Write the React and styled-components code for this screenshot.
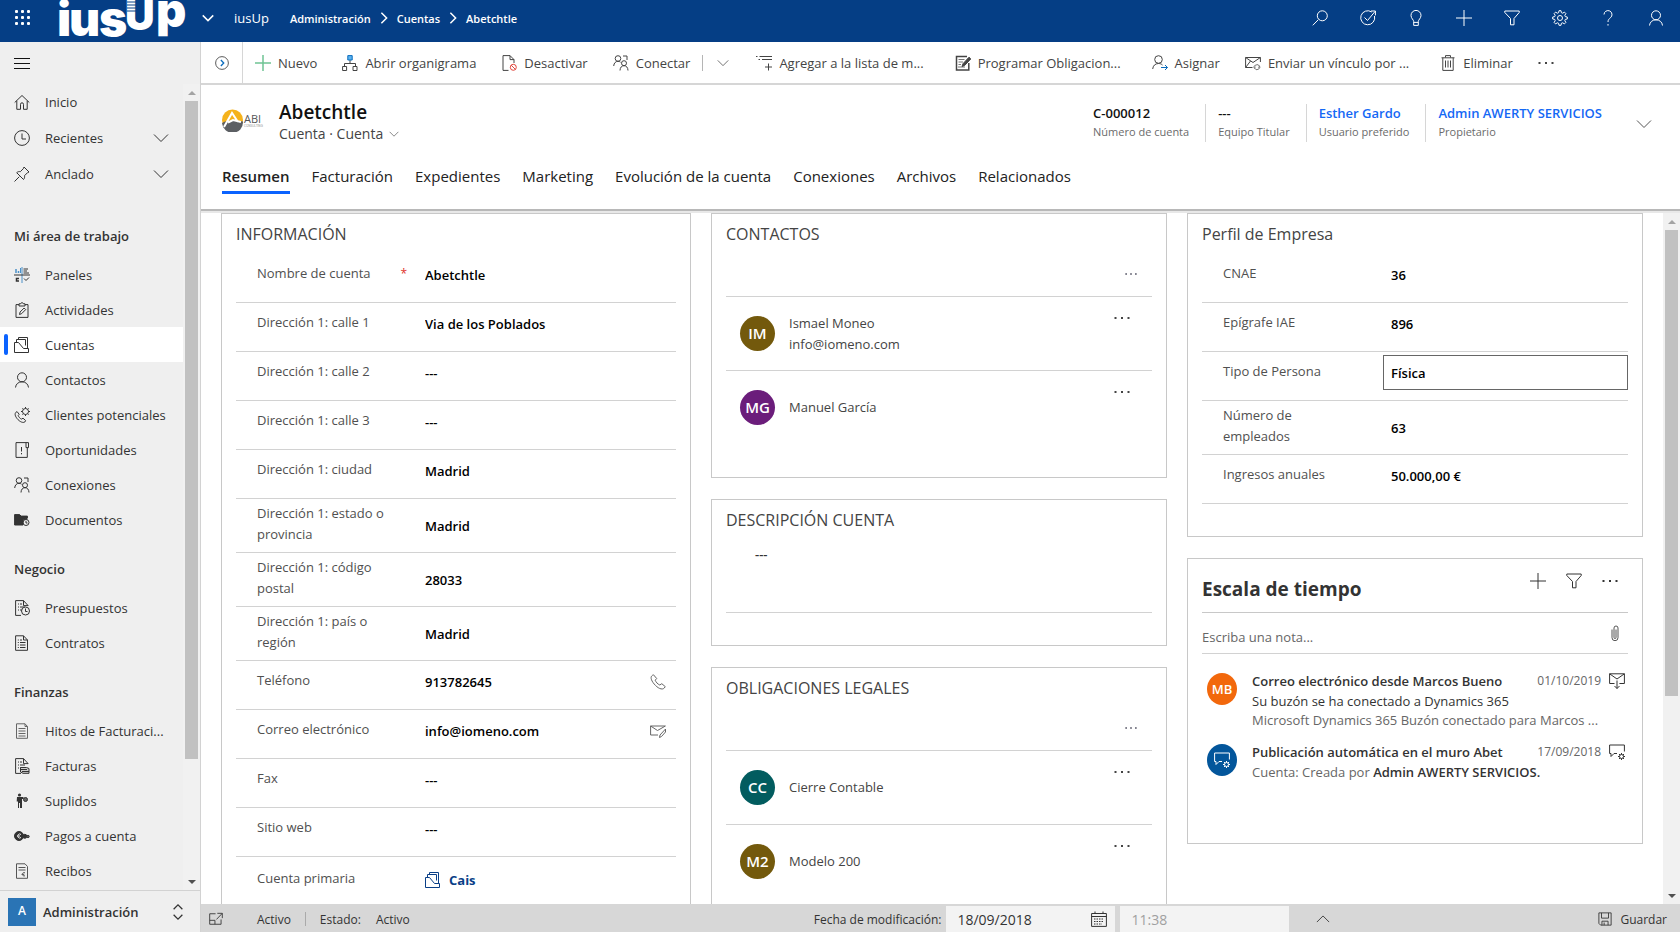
import React from 'react';
import styled, { createGlobalStyle, css } from 'styled-components';

const GlobalStyle = createGlobalStyle`
  * {
    box-sizing: border-box;
  }

  body {
    margin: 0;
    font-family: 'Open Sans', 'Noto Sans', sans-serif;
    font-size: 13px;
    color: #333;
    background: #fff;
  }

  button, input, select, textarea {
    font: inherit;
    color: inherit;
    background: none;
    border: 0;
    margin: 0;
    padding: 0;
    border-radius: 0;
  }

  h1, h2, h3, p, ul {
    margin: 0;
    padding: 0;
    font-weight: 400;
    list-style: none;
  }

  a {
    color: inherit;
    text-decoration: none;
  }
`;

/* ---------- icons ---------- */

const Svg = styled.svg`
  display: block;
  flex: none;
  width: ${props => props.$size || 16}px;
  height: ${props => props.$size || 16}px;
  fill: none;
  stroke: currentColor;
  stroke-width: ${props => props.$stroke || 1};
`;

const people = (
  <>
    <circle cx="5" cy="3.5" r="2.8" />
    <path d="M.7 11c.2-3 2-4.700 4.300-4.700 1 0 1.800.3 2.500.9M10 1h4v4" />
    <circle cx="11" cy="8.200" r="2.500" />
    <path d="M7 15.500c.1-3 1.600-4.800 4-4.800s3.900 1.800 4 4.800" />
  </>
);

const page = <path d="M14 6v-.5L9.500.6H1.600v14.800H7M9.500.6v5H14M4 4h1M6 4h2M4 7h1M6 7h5M4 10h1M6 10h2" />;

const icons = {
  search: <path d="M6.300 9.700.8 15.300M10.300.8a5 5 0 1 1 0 10 5 5 0 0 1 0-10z" />,
  target: <path d="M11.700 2A7 7 0 1 0 14.500 6M4.500 7.500l3 3L15 1.500M11 1h4.400v4.400" />,
  bulb: <path d="M5.700 15.400h4.600v-4c0-1.500 2.700-3 2.700-6a5 5 0 0 0-10 0c0 3 2.700 4.500 2.700 6zM5.700 12.400h4.600" />,
  plus: <path d="M8 0v16M0 8h16" />,
  filter: <path d="M.8 1h14.400v1.500L10 8.500v6.300H6.500V8.500L.8 2.500z" />,
  gear: (
    <>
      <path d="M7 .7h2l.4 2 1.300.5 1.700-1.100 1.500 1.500-1.100 1.700.5 1.300 2 .4v2l-2 .4-.5 1.300 1.100 1.700-1.500 1.500-1.700-1.100-1.300.5-.4 2H7l-.4-2-1.300-.5-1.700 1.100-1.500-1.500 1.100-1.700-.5-1.300-2-.4V7l2-.4.5-1.300-1.100-1.700 1.500-1.500 1.700 1.100 1.300-.5z" />
      <circle cx="8" cy="8" r="2.500" />
    </>
  ),
  help: <path d="M4 4.500a4 4 0 1 1 6.500 3.200C9 9 8 9.800 8 12M8 14v1.600" />,
  person: (
    <>
      <circle cx="8" cy="5.300" r="4.500" />
      <path d="M1.500 15.500c.3-3.500 3-5.700 6.500-5.700s6.200 2.200 6.500 5.700" />
    </>
  ),
  chevronDown: <path d="M1 4.500l7 7 7-7" />,
  chevronUp: <path d="M1 11.500l7-7 7 7" />,
  chevronRight: <path d="M4.500 1l7 7-7 7" />,
  menu: <path d="M0 3.500h16M0 8.500h16M0 13.500h16" />,
  home: <path d="M.7 8.500 8 1.500l7.300 7M2.800 6.800v8.500h3.700v-5a1.500 1.500 0 0 1 3 0v5h3.700V6.800" />,
  clock: (
    <>
      <circle cx="8" cy="8" r="7.400" />
      <path d="M8 3.500V9h4" />
    </>
  ),
  pin: <path d="M.5 15.500l4.800-4.800M10 1l5 5-1.500.7-3 3c.3 1.500 0 2.800-1 3.800L2.700 6.700c1-1 2.300-1.300 3.600-1l3-3z" />,
  panels: (
    <>
      <path d="M2 2v4M4.500 4v2" stroke="#4a90c8" strokeWidth="1.500" />
      <path d="M6.500 1v5M8 0v16" stroke="#4a90c8" />
      <path d="M0 8h16M9.500 2H14M9.500 4H13M9.500 6H15M10 11.500l2 2 3-3" />
      <path d="M5 11.500H2.500v2.500H5" strokeWidth="1.500" />
    </>
  ),
  clipboard: <path d="M5 2.600H2v12.800h12V2.600h-3M5 1.800h1.500C7 .3 9 .3 9.500 1.800H11V4H5zM5.500 12.500l.6-2.500 4-4 1.600 1.600-4 4z" />,
  account: <path d="M2.500 5.500V2.500h9v6M4.500 2.500v-2h9v11M.5 15.500v-10h4l5 6h5v4z" />,
  leads: (
    <>
      <path d="M3 4.500C.6 6 .4 8 3 11.500c3 3.600 6 4.600 7.800 3.500l.8-1.500-2.600-2.300-1.500.9c-1.500-.6-2.700-2-3.300-3.500l1-1.300z" />
      <circle cx="11.500" cy="4.500" r="3" />
      <path d="M11.500 0v1.500M11.500 7.500V9M7 4.500h1.500M14.500 4.500H16M8.400 1.400l1 1M13.600 6.600l1 1M14.600 1.400l-1 1M8.400 7.600l1-1" />
    </>
  ),
  opportunity: <path d="M12 .6H2v14.800h11.300V6M12 .6h2.500v5H12zM7.500 5v4.500M7.500 11v1.300" />,
  people,
  folder: (
    <>
      <path d="M.6 2.600h5l1.500 1.500h6.300v2L9 8v5H.6z" fill="currentColor" />
      <circle cx="12" cy="10.500" r="3" />
      <path d="M13.500 7h-3M12 9v2h1.500" />
    </>
  ),
  quote: (
    <>
      {page}
      <circle cx="11.500" cy="11" r="4" fill="#efefef" />
      <path d="M11.500 8.500v3h2" />
    </>
  ),
  contract: <path d="M13.500 5 9.500.8H1.600v14.500h11.900zM9.500.8V5h4M3.800 5h1M6 5h2M3.800 7.500h1M6 7.500h5.500M3.800 10h1M6 10h5.500M3.800 12.500h1M6 12.500h5.500" />,
  milestone: <path d="M13.500 3.500 11 .8H2.500v14.500h11zM11 .8v2.700h2.500M4.500 5.500h7M4.500 8h7M4.500 10.500h7M4.500 13h7" stroke="#666" />,
  invoice: (
    <>
      {page}
      <path d="M6.500 9.500h6l2.500 1v4.800H9L6.500 14zM6.500 11.500H13M8 13.500h7" fill="#ccc" />
    </>
  ),
  supplied: (
    <>
      <circle cx="5.500" cy="2" r="1.600" fill="currentColor" stroke="none" />
      <path d="M3 4h6.500v2H8v9H6V10H5v5H4V8.500H2.700z" fill="currentColor" stroke="none" />
      <circle cx="11.500" cy="6.500" r="2" fill="#666" />
    </>
  ),
  payments: (
    <>
      <circle cx="5" cy="8" r="4.500" fill="currentColor" />
      <path d="M7 6.500a2 2 0 1 0 0 3M3.500 8H6" stroke="#efefef" />
      <circle cx="10.800" cy="8.300" r="2" fill="currentColor" />
      <circle cx="14" cy="8.500" r="1.200" fill="#666" />
    </>
  ),
  receipt: <path d="M13.500 3.500 11 .8H2.500v14.500h11zM4.500 4.500h7M4.500 7h7M11 9.800c-2-.6-2.500.4-2.500 1.500s.7 2 2.500 1.500M7.500 11.400h2.700" stroke="#555" />,
  circleRight: (
    <>
      <circle cx="8" cy="8" r="7.300" />
      <path d="M6.700 4.500 10 8l-3.300 3.500" stroke="#0b6cbd" strokeWidth="1.500" />
    </>
  ),
  newPlus: <path d="M8 0v16M0 8h16" stroke="#6fc494" strokeWidth="1.500" />,
  orgChart: (
    <>
      <path d="M8 5v3.500M2.500 11V8.500h11V11M.6 11.500h4v4h-4zM11 11.500h4v4h-4z" />
      <path d="M5.800.6h4.400V5H5.800z" fill="#5db4f0" stroke="#0b6cbd" />
    </>
  ),
  deactivate: (
    <>
      <path d="M13 8V4.600L9 .6H2v14.800h5.500M9 .6v4h4" />
      <circle cx="12.300" cy="12.300" r="3" stroke="#e0453c" />
      <path d="M10.200 10.200l4.200 4.200" stroke="#e0453c" />
    </>
  ),
  listPlus: <path d="M0 1.500h1.500M3.500 1.500H16M2.500 4.500H4M6 4.500h10M12.500 8.500v7M9 12h7" />,
  note: (
    <>
      <path d="M12 1.500H1.500v13.500h12.300V8" strokeWidth="1.500" />
      <path d="M3.500 4.500h6M3.500 7h4.500M3.500 9.500h2.500M3 12h7" stroke="#777" />
      <path d="M7 11.500l1-2.800 6-6.500 1.800 1.700-6.200 6.600z" fill="currentColor" />
    </>
  ),
  assign: (
    <>
      <circle cx="6.500" cy="4.500" r="3.800" />
      <path d="M.7 14c.3-3.300 2.500-5.500 5.800-5.500 1.700 0 3 .5 4 1.500" />
      <path d="M9 12.500h6.500M13 10l2.500 2.500L13 15" stroke="#0b6cbd" />
    </>
  ),
  mailLink: (
    <>
      <path d="M7.500 12.500H.6v-10h14.800V7M.6 2.500 8 7.500l7.400-5M.6 12.500 5.500 6" />
      <path d="M10 13.700a1.800 1.800 0 0 1 0-3.300l2-.7a1.800 1.800 0 0 1 1.500 3.200M13.500 10.500a1.800 1.800 0 0 1 .5 3.300l-2 .9a1.800 1.800 0 0 1-1.600-3" stroke="#777" />
    </>
  ),
  trash: <path d="M1.500 2.800h13M5.500 2.500V.6h5v1.900M2.800 2.800v12.600h10.400V2.800M5.500 5.500v7M8 5.500v7M10.500 5.500v7" />,
  more: <path d="M.5 8h2M7 8h2M13.500 8h2" strokeWidth="2" />,
  phone: <path d="M3.500.8C.5 2 .3 4.500 3 8.500c3 4.300 7.500 7.500 10.500 6.200l1.800-2-3.500-3-2 1.300C7.500 10 6 8.200 5.200 6.200L6.700 4.500z" />,
  mailEdit: <path d="M8 12H.6V3h14.800M.6 3 7.500 7.500 15.400 3M9.500 14.500l.5-2.500 5.500-6v3l-4 4.500z" />,
  clip: <path d="M5 4.500v8.200a3 3 0 0 0 6 0V3a2 2 0 0 0-4 0v9.500a1 1 0 0 0 2 0V4.500" />,
  mailIn: <path d="M5.500 10.500H.6V.8h14.800v9.700h-5M.6.8 8 6l7.400-5.200M8 7.500v8M5.500 13 8 15.500l2.500-2.500" />,
  postGear: (
    <>
      <path d="M8 9.500H5l-3 3v-3H.6V1h14.800v6.500" />
      <circle cx="12.500" cy="12.500" r="2" />
      <path d="M12.500 9v1.500M12.500 14.500V16M9 12.500h1.500M14.500 12.500H16M10 10l1 1M14 14l1 1M15 10l-1 1M10 15l1-1" />
    </>
  ),
  popOut: <path d="M7.500 2H.8v12h13V8.500M9.500 1.500h5.700V7M15 1.700 8.500 8.500M.8 9.500h6v4.500" />,
  calendar: (
    <>
      <path d="M.6 2.500h14.800v12.900H.6zM.6 5.500h14.800M4 .5v2M12 .5v2" />
      <path d="M3 8h10M3 10.500h10M3 13h8" strokeDasharray="1.500 1" />
    </>
  ),
  save: <path d="M1 1h14v14H3l-2-2zM4 1v6h8V1M4.500 15v-4.500h7V15M7 12v3" />,
};

const Icon = ({ name, size, stroke }) => (
  <Svg viewBox="0 0 16 16" $size={size} $stroke={stroke} aria-hidden="true">
    {icons[name]}
  </Svg>
);

/* ---------- top bar ---------- */

const Page = styled.div`
  height: 100vh;
  display: flex;
  flex-direction: column;
  overflow: hidden;
`;

const TopBar = styled.header`
  height: 42px;
  flex: none;
  display: flex;
  align-items: center;
  padding: 0 16px 6px 15px;
  background: #053e85;
  color: #fff;
`;

const IconButton = styled.button`
  display: flex;
  align-items: center;
  justify-content: center;
  flex: none;
  width: ${props => props.$width || 16}px;
  height: 24px;
  cursor: pointer;
`;

const Waffle = styled.svg`
  width: 16px;
  height: 16px;
  fill: #fff;
`;

const LogoMark = styled.svg`
  width: 130px;
  height: 42px;
  flex: none;
  align-self: flex-start;
  margin: 0 12px 0 27px;
  fill: #fff;
  font-family: Inter, sans-serif;
  font-weight: 900;
`;

const AppName = styled.a`
  margin: 0 21px 0 18px;
`;

const Crumbs = styled.nav`
  display: flex;
  align-items: center;
  gap: 7px;
  font-size: 11px;
  font-weight: 600;
`;

const TopActions = styled.div`
  display: flex;
  gap: 32px;
  margin-left: auto;
`;

/* ---------- side bar ---------- */

const Body = styled.div`
  flex: 1;
  min-height: 0;
  display: flex;
`;

const SideBar = styled.aside`
  width: 201px;
  flex: none;
  display: flex;
  flex-direction: column;
  background: #efefef;
  border-right: 1px solid #d2d2d2;
`;

const MenuButton = styled.button`
  height: 42px;
  flex: none;
  padding: 0 0 0 14px;
  display: flex;
  align-items: center;
  color: #111;
`;

const NavArea = styled.div`
  flex: 1;
  min-height: 0;
  display: flex;
  overflow: hidden;
`;

const Nav = styled.nav`
  flex: 1;
  min-width: 0;
  overflow: hidden;
`;

const QuickLinks = styled.ul`
  display: grid;
  gap: 1px;
  padding-bottom: 13px;
`;

const NavHeading = styled.h2`
  height: 53px;
  padding: 21px 14px 0;
  font-size: 13px;
  line-height: 22px;
  font-weight: 600;
`;

const NavLink = styled.a`
  position: relative;
  height: 35px;
  display: flex;
  align-items: center;
  gap: 15px;
  padding: 0 14px;
  white-space: nowrap;
  background: ${props => (props.$active ? '#fff' : 'transparent')};

  ${props =>
    props.$active &&
    css`
      &::before {
        content: '';
        position: absolute;
        left: 4px;
        top: 7px;
        width: 4px;
        height: 21px;
        border-radius: 2px;
        background: #0b63ff;
      }
    `}
`;

const NavEnd = styled.span`
  margin-left: auto;
`;

const Track = styled.div`
  width: 17px;
  flex: none;
  display: flex;
  flex-direction: column;
  align-items: center;
  justify-content: space-between;
  padding: 7px 0 6px;
  background: #f1f1f1;
`;

const Thumb = styled.div`
  width: 13px;
  height: ${props => props.$length};
  margin: 6px 0 auto;
  background: #c1c1c1;
`;

const Arrow = styled.span`
  border: 4px solid transparent;
  ${props =>
    props.$up
      ? 'border-top: 0; border-bottom-color: #a3a3a3;'
      : 'border-bottom: 0; border-top-color: #505050;'}
`;

const AreaSwitch = styled.button`
  height: 42px;
  flex: none;
  display: flex;
  align-items: center;
  gap: 7px;
  padding: 0 17px 0 8px;
  border-top: 1px solid #d2d2d2;
  font-weight: 600;
`;

const AreaBadge = styled.span`
  width: 28px;
  height: 28px;
  line-height: 26px;
  background: #2a74b5;
  color: #fff;
  font-size: 12px;
`;

/* ---------- main column ---------- */

const Main = styled.main`
  flex: 1;
  min-width: 0;
  display: flex;
  flex-direction: column;
`;

const CommandBar = styled.div`
  height: 43px;
  flex: none;
  display: flex;
  align-items: center;
  gap: 25px;
  border-bottom: 2px solid #d6d6d6;
  white-space: nowrap;
  color: #444;
`;

const Expander = styled.div`
  align-self: stretch;
  width: 42px;
  margin-right: -13px;
  display: flex;
  align-items: center;
  justify-content: center;
  border-right: 1px solid #d6d6d6;
`;

const Command = styled.button`
  display: flex;
  align-items: center;
  gap: 7px;
  margin-right: ${props => (props.$long ? 6 : 0)}px;
  cursor: pointer;
`;

const Divider = styled.span`
  width: 1px;
  height: 16px;
  background: #b5b5b5;
  margin: 0 -13px;
`;

const RecordHeader = styled.section`
  flex: none;
  height: 126px;
  display: flex;
  flex-direction: column;
  justify-content: space-between;
  padding: 0 10px 0 21px;
  border-bottom: 2px solid #b8b8b8;
  box-shadow: 0 2px 0 #e8e8e8;
  z-index: 1;
`;

const RecordTop = styled.div`
  display: flex;
  padding-top: 15px;
`;

const CompanyLogo = styled.svg`
  width: 42px;
  height: 24px;
  margin: 8px 15px 0 0;
`;

const RecordTitle = styled.h1`
  font-size: 19px;
  line-height: 25px;
  font-weight: 600;
  color: #111;
`;

const RecordType = styled.button`
  display: flex;
  align-items: center;
  gap: 6px;
  font-size: 14px;
  line-height: 18px;
  color: #444;
`;

const Facts = styled.div`
  display: flex;
  margin-left: auto;
  padding-top: 4px;
`;

const Fact = styled.div`
  height: 38px;
  padding: 0 16px 0 12px;
  border-left: 1px solid ${props => (props.$first ? 'transparent' : '#d6d6d6')};
  font-weight: 600;
  line-height: 18px;
  color: #111;

  a {
    color: #1468f5;
  }

  p {
    font-size: 11px;
    line-height: 20px;
    color: #6b6b6b;
  }
`;

const HeaderToggle = styled(IconButton)`
  margin-top: 12px;
  color: #555;
`;

const Tabs = styled.div`
  display: flex;
  gap: 22px;
  padding-bottom: 15px;
`;

const Tab = styled.button`
  font-size: 15px;
  line-height: 24px;
  padding-bottom: 3px;
  color: #222;
  font-weight: ${props => (props.$active ? 600 : 400)};
  border-bottom: 3px solid ${props => (props.$active ? '#0b63ff' : 'transparent')};
`;

const FormArea = styled.div`
  flex: 1;
  min-height: 0;
  display: flex;
  overflow: hidden;
  padding-top: 2px;
`;

const FormGrid = styled.div`
  flex: 1;
  min-width: 0;
  display: grid;
  grid-template-columns: 470fr 456fr 456fr;
  gap: 20px;
  align-items: start;
  padding: 0 20px;
`;

const Column = styled.div`
  display: grid;
  gap: 21px;
  min-width: 0;
`;

const Panel = styled.section`
  min-width: 0;
  padding: 0 14px 32px;
  border: 1px solid #c8c8c8;
`;

const PanelTitle = styled.h2`
  height: 40px;
  font-size: 16px;
  line-height: 40px;
  color: #444;
`;

const Row = styled.div`
  display: grid;
  grid-template-columns: 168px 1fr auto;
  min-height: ${props => (props.$tall ? 54 : 49)}px;
  padding-left: 21px;
  border-bottom: 1px solid #d2d2d2;
`;

const RowLabel = styled.label`
  display: flex;
  justify-content: space-between;
  padding: ${props => props.$top || 9}px 18px 0 0;
  line-height: 21px;
  color: #505050;

  span {
    max-width: 132px;
  }

  b {
    color: #e0322b;
    font-size: 12px;
    font-weight: 400;
  }
`;

const FieldInput = styled.input`
  min-width: 0;
  width: 100%;
  height: 24px;
  align-self: center;
  margin-bottom: ${props => (props.$tall ? 0 : 7)}px;
  font-weight: 600;
  color: #000;
`;

const BoxedSelect = styled.select`
  appearance: none;
  height: 35px;
  margin: 3px 0 0 -8px;
  padding: 0 7px;
  border: 1px solid #666;
  color: #000;
  font-weight: 600;
`;

const Lookup = styled.a`
  display: flex;
  align-items: center;
  gap: 8px;
  padding-bottom: 3px;
  font-weight: 700;
  color: #0a3f87;
`;

const RowAction = styled(IconButton)`
  align-self: center;
  margin: 0 10px 7px 0;
  color: #666;
`;

const ListBar = styled.div`
  height: 43px;
  display: flex;
  justify-content: flex-end;
  align-items: center;
  padding: 0 15px 2px 0;
  border-bottom: 1px solid #d2d2d2;
  color: #445;
`;

const ListItem = styled.li`
  height: 74px;
  display: flex;
  align-items: center;
  gap: 14px;
  padding: 0 22px 0 14px;
  border-bottom: 1px solid #d2d2d2;
  line-height: 21px;
  color: #444;

  &:last-child {
    border-bottom-color: transparent;
  }

  button {
    align-self: flex-start;
    margin: 9px 0 0 auto;
  }
`;

const Avatar = styled.span`
  display: flex;
  align-items: center;
  justify-content: center;
  flex: none;
  width: ${props => (props.$small ? 30 : 35)}px;
  height: ${props => (props.$small ? 32 : 35)}px;
  border-radius: 50%;
  background: ${props => props.$color};
  color: #fff;
  font-size: ${props => (props.$small ? 13 : 15)}px;
  font-weight: 600;
`;

const Description = styled.textarea`
  display: block;
  width: 100%;
  height: 73px;
  padding: 5px 29px;
  resize: none;
  border-bottom: 1px solid #d2d2d2;
  font-weight: 600;
`;

/* ---------- timeline ---------- */

const TimelineHead = styled.div`
  height: 54px;
  display: flex;
  align-items: flex-start;
  gap: 20px;
  padding: 10px 10px 0 0;
  border-bottom: 1px solid #c8c8c8;
`;

const TimelineTitle = styled.h2`
  flex: 1;
  font-size: 19px;
  line-height: 40px;
  font-weight: 700;
`;

const NoteBar = styled.div`
  height: 41px;
  display: flex;
  align-items: center;
  padding: 0 5px 0 0;
  border-bottom: 1px solid #d2d2d2;
  color: #555;

  input {
    flex: 1;
    height: 32px;
    padding-top: 8px;
  }

  input::placeholder {
    color: #666;
    opacity: 1;
  }
`;

const Activities = styled.ul`
  height: 157px;
  padding: 15px 3px 0 5px;
`;

const Activity = styled.li`
  height: 71px;
  display: flex;
  gap: 15px;
  padding-top: 4px;
`;

const ActivityText = styled.div`
  flex: 1;
  min-width: 0;
  margin-top: -3px;
  line-height: 19px;
  white-space: nowrap;
  color: #666;

  b {
    font-weight: 600;
    color: #333;
  }
`;

const ActivityTop = styled.div`
  height: 22px;
  display: flex;
  align-items: center;
  gap: 8px;
  line-height: 22px;
  color: #333;
`;

const ActivityTitle = styled.h3`
  flex: 1;
  font-size: 13px;
  font-weight: 600;
`;

const ActivityDate = styled.time`
  font-size: 12px;
  color: #666;
`;

const Subject = styled.p`
  color: #333;
`;

/* ---------- footer ---------- */

const StatusBar = styled.footer`
  height: 28px;
  flex: none;
  display: flex;
  align-items: center;
  padding: 2px 13px 0 7px;
  background: #d7d7d7;
  font-size: 12px;
  white-space: nowrap;
  z-index: 1;
`;

const StatusText = styled.span`
  margin-left: ${props => props.$left}px;
`;

const StatusDivider = styled.span`
  width: 1px;
  height: 14px;
  margin: 0 14px;
  background: #aaa;
`;

const Modified = styled.div`
  align-self: stretch;
  flex: 1;
  display: flex;
  align-items: center;
  justify-content: center;
  gap: 5px;
  padding-left: 137px;
`;

const StatusField = styled.span`
  align-self: stretch;
  width: 169px;
  display: flex;
  align-items: center;
  padding: 0 8px 0 11px;
  background: #f3f3f3;
  color: ${props => (props.$muted ? '#a0a0a0' : '#333')};

  input {
    flex: 1;
    width: 0;
    font-size: 14px;
  }
`;

const UpButton = styled(IconButton)`
  margin-left: 21px;
`;

const SaveButton = styled.button`
  display: flex;
  align-items: center;
  gap: 8px;
`;

/* ---------- data ---------- */

const workArea = [
  ['panels', 'Paneles'],
  ['clipboard', 'Actividades'],
  ['account', 'Cuentas'],
  ['person', 'Contactos'],
  ['leads', 'Clientes potenciales'],
  ['opportunity', 'Oportunidades'],
  ['people', 'Conexiones'],
  ['folder', 'Documentos'],
];

const business = [
  ['quote', 'Presupuestos'],
  ['contract', 'Contratos'],
];

const finance = [
  ['milestone', 'Hitos de Facturaci...'],
  ['invoice', 'Facturas'],
  ['supplied', 'Suplidos'],
  ['payments', 'Pagos a cuenta'],
  ['receipt', 'Recibos'],
];

const groups = [
  { title: 'Mi área de trabajo', items: workArea },
  { title: 'Negocio', items: business },
  { title: 'Finanzas', items: finance },
];

const topActions = [
  ['search', 'Buscar'],
  ['target', 'Asistente'],
  ['bulb', 'Ideas'],
  ['plus', 'Crear'],
  ['filter', 'Filtrar'],
  ['gear', 'Configuración'],
  ['help', 'Ayuda'],
  ['person', 'Perfil'],
];

const information = [
  { label: 'Nombre de cuenta', value: 'Abetchtle', required: true },
  { label: 'Dirección 1: calle 1', value: 'Via de los Poblados' },
  { label: 'Dirección 1: calle 2', value: '---' },
  { label: 'Dirección 1: calle 3', value: '---' },
  { label: 'Dirección 1: ciudad', value: 'Madrid' },
  { label: 'Dirección 1: estado o provincia', value: 'Madrid', tall: true },
  { label: 'Dirección 1: código postal', value: '28033', tall: true },
  { label: 'Dirección 1: país o región', value: 'Madrid', tall: true },
  { label: 'Teléfono', value: '913782645', action: 'phone' },
  { label: 'Correo electrónico', value: 'info@iomeno.com', action: 'mailEdit' },
  { label: 'Fax', value: '---' },
  { label: 'Sitio web', value: '---' },
];

const tabs = [
  'Resumen',
  'Facturación',
  'Expedientes',
  'Marketing',
  'Evolución de la cuenta',
  'Conexiones',
  'Archivos',
  'Relacionados',
];

/* ---------- components ---------- */

const Scrollbar = ({ length }) => (
  <Track aria-hidden="true">
    <Arrow $up />
    <Thumb $length={length} />
    <Arrow />
  </Track>
);

const Cmd = ({ icon, long, children }) => (
  <Command type="button" $long={long}>
    <Icon name={icon} />
    {children}
  </Command>
);

const Field = ({ id, label, value, required, tall, action }) => (
  <Row $tall={tall}>
    <RowLabel htmlFor={id} $top={tall ? 4 : 9}>
      <span>{label}</span>
      {required && <b>*</b>}
    </RowLabel>
    <FieldInput id={id} defaultValue={value} $tall={tall} />
    {action && (
      <RowAction type="button" aria-label={label}>
        <Icon name={action} />
      </RowAction>
    )}
  </Row>
);

const PersonItem = ({ initials, color, name, mail }) => (
  <ListItem>
    <Avatar $color={color}>{initials}</Avatar>
    <div>
      <p>{name}</p>
      {mail && <p>{mail}</p>}
    </div>
    <IconButton type="button" aria-label={`Más: ${name}`}>
      <Icon name="more" />
    </IconButton>
  </ListItem>
);

const SideNav = () => (
  <SideBar>
    <MenuButton type="button" aria-label="Menú">
      <Icon name="menu" />
    </MenuButton>
    <NavArea>
      <Nav>
        <QuickLinks>
          <li>
            <NavLink href="#inicio"><Icon name="home" />Inicio</NavLink>
          </li>
          <li>
            <NavLink href="#recientes">
              <Icon name="clock" />Recientes
              <NavEnd><Icon name="chevronDown" /></NavEnd>
            </NavLink>
          </li>
          <li>
            <NavLink href="#anclado">
              <Icon name="pin" />Anclado
              <NavEnd><Icon name="chevronDown" /></NavEnd>
            </NavLink>
          </li>
        </QuickLinks>
        {groups.map(group => (
          <div key={group.title}>
            <NavHeading>{group.title}</NavHeading>
            <ul>
              {group.items.map(([icon, text]) => (
                <li key={text}>
                  <NavLink href={`#${icon}`} $active={text === 'Cuentas'}>
                    <Icon name={icon} />
                    {text}
                  </NavLink>
                </li>
              ))}
            </ul>
          </div>
        ))}
      </Nav>
      <Scrollbar length="83%" />
    </NavArea>
    <AreaSwitch type="button">
      <AreaBadge>A</AreaBadge>
      Administración
      <NavEnd>
        <Icon name="chevronUp" size={10} stroke={2} />
        <Icon name="chevronDown" size={10} stroke={2} />
      </NavEnd>
    </AreaSwitch>
  </SideBar>
);

const Header = () => (
  <TopBar>
    <IconButton type="button" aria-label="Aplicaciones">
      <Waffle viewBox="0 0 16 16">
        {[0, 6, 12].map(y => [0, 6, 12].map(x => <rect key={`${x}${y}`} x={x} y={y} width="3" height="3" rx="1" />))}
      </Waffle>
    </IconButton>
    <LogoMark viewBox="0 0 130 42" role="img" aria-label="iusUp">
      <text x="-1 11 41" y="36" fontSize="48">ius</text>
      <text x="67" y="30" fontSize="41">U</text>
      <text x="98" y="27" fontSize="47">p</text>
      <path d="M69 2h10M69 5h10M69 8h10M69 11h10" stroke="#053e85" />
    </LogoMark>
    <IconButton type="button" aria-label="Cambiar aplicación">
      <Icon name="chevronDown" size={12} stroke={2} />
    </IconButton>
    <AppName href="#iusup">iusUp</AppName>
    <Crumbs>
      <a href="#administracion">Administración</a>
      <Icon name="chevronRight" size={12} stroke={2} />
      <a href="#cuentas">Cuentas</a>
      <Icon name="chevronRight" size={12} stroke={2} />
      <a href="#abetchtle">Abetchtle</a>
    </Crumbs>
    <TopActions>
      {topActions.map(([icon, label]) => (
        <IconButton key={icon} type="button" aria-label={label}>
          <Icon name={icon} />
        </IconButton>
      ))}
    </TopActions>
  </TopBar>
);

const Commands = () => (
  <CommandBar>
    <Expander>
      <IconButton type="button" aria-label="Expandir">
        <Icon name="circleRight" size={14} />
      </IconButton>
    </Expander>
    <Cmd icon="newPlus">Nuevo</Cmd>
    <Cmd icon="orgChart">Abrir organigrama</Cmd>
    <Cmd icon="deactivate">Desactivar</Cmd>
    <Cmd icon="people">Conectar</Cmd>
    <Divider />
    <IconButton type="button" aria-label="Más conexiones">
      <Icon name="chevronDown" size={12} />
    </IconButton>
    <Cmd icon="listPlus" long>Agregar a la lista de m...</Cmd>
    <Cmd icon="note" long>Programar Obligacion...</Cmd>
    <Cmd icon="assign">Asignar</Cmd>
    <Cmd icon="mailLink" long>Enviar un vínculo por ...</Cmd>
    <Cmd icon="trash">Eliminar</Cmd>
    <IconButton type="button" aria-label="Más comandos">
      <Icon name="more" />
    </IconButton>
  </CommandBar>
);

const Record = () => (
  <RecordHeader>
    <RecordTop>
      <CompanyLogo viewBox="0 0 42 24">
        <circle cx="10.500" cy="12" r="10.500" fill="#f5b21b" />
        <path d="M0 15c5-3 14-3 21-1.500a10.500 10.500 0 0 1-21 1.500z" fill="#5c5f63" />
        <path d="M2 19 10 5l6 9M6 14.500l5-2.500 8 2" fill="none" stroke="#fff" strokeWidth="2" />
        <text x="22" y="15" fontSize="11" fill="#555">ABI</text>
        <text x="22" y="19" fontSize="3" fill="#888">CONSULTING</text>
      </CompanyLogo>
      <div>
        <RecordTitle>Abetchtle</RecordTitle>
        <RecordType type="button">
          Cuenta · Cuenta <Icon name="chevronDown" size={10} />
        </RecordType>
      </div>
      <Facts>
        <Fact $first>C-000012<p>Número de cuenta</p></Fact>
        <Fact>---<p>Equipo Titular</p></Fact>
        <Fact><a href="#esther">Esther Gardo</a><p>Usuario preferido</p></Fact>
        <Fact><a href="#admin">Admin AWERTY SERVICIOS</a><p>Propietario</p></Fact>
      </Facts>
      <HeaderToggle type="button" aria-label="Expandir encabezado" $width={52}>
        <Icon name="chevronDown" />
      </HeaderToggle>
    </RecordTop>
    <Tabs role="tablist">
      {tabs.map(tab => (
        <Tab key={tab} type="button" role="tab" $active={tab === 'Resumen'}>{tab}</Tab>
      ))}
    </Tabs>
  </RecordHeader>
);

const Timeline = () => (
  <Panel>
    <TimelineHead>
      <TimelineTitle>Escala de tiempo</TimelineTitle>
      <IconButton type="button" aria-label="Agregar"><Icon name="plus" /></IconButton>
      <IconButton type="button" aria-label="Filtrar escala"><Icon name="filter" /></IconButton>
      <IconButton type="button" aria-label="Más"><Icon name="more" /></IconButton>
    </TimelineHead>
    <NoteBar>
      <input aria-label="Nota" placeholder="Escriba una nota..." />
      <IconButton type="button" aria-label="Adjuntar"><Icon name="clip" /></IconButton>
    </NoteBar>
    <Activities>
      <Activity>
        <Avatar $small $color="#f2680c">MB</Avatar>
        <ActivityText>
          <ActivityTop>
            <ActivityTitle>Correo electrónico desde Marcos Bueno</ActivityTitle>
            <ActivityDate>01/10/2019</ActivityDate>
            <Icon name="mailIn" />
          </ActivityTop>
          <Subject>Su buzón se ha conectado a Dynamics 365</Subject>
          <p>Microsoft Dynamics 365 Buzón conectado para Marcos ...</p>
        </ActivityText>
      </Activity>
      <Activity>
        <Avatar $small $color="#03569b"><Icon name="postGear" /></Avatar>
        <ActivityText>
          <ActivityTop>
            <ActivityTitle>Publicación automática en el muro Abet</ActivityTitle>
            <ActivityDate>17/09/2018</ActivityDate>
            <Icon name="postGear" />
          </ActivityTop>
          <p>Cuenta: Creada por <b>Admin AWERTY SERVICIOS.</b></p>
        </ActivityText>
      </Activity>
    </Activities>
  </Panel>
);

const Form = () => (
  <FormArea>
    <FormGrid>
      <Panel>
        <PanelTitle>INFORMACIÓN</PanelTitle>
        {information.map((field, i) => <Field key={field.label} id={`info${i}`} {...field} />)}
        <Row>
          <RowLabel as="span" $top={11}>Cuenta primaria</RowLabel>
          <Lookup href="#cais"><Icon name="account" />Cais</Lookup>
        </Row>
      </Panel>
      <Column>
        <Panel>
          <PanelTitle>CONTACTOS</PanelTitle>
          <ListBar>
            <IconButton type="button" aria-label="Más contactos" $width={12}>
              <Icon name="more" size={12} />
            </IconButton>
          </ListBar>
          <ul>
            <PersonItem initials="IM" color="#73590c" name="Ismael Moneo" mail="info@iomeno.com" />
            <PersonItem initials="MG" color="#6b1d7b" name="Manuel García" />
          </ul>
        </Panel>
        <Panel>
          <PanelTitle>DESCRIPCIÓN CUENTA</PanelTitle>
          <Description aria-label="Descripción cuenta" defaultValue="---" />
        </Panel>
        <Panel>
          <PanelTitle>OBLIGACIONES LEGALES</PanelTitle>
          <ListBar>
            <IconButton type="button" aria-label="Más obligaciones" $width={12}>
              <Icon name="more" size={12} />
            </IconButton>
          </ListBar>
          <ul>
            <PersonItem initials="CC" color="#025c5f" name="Cierre Contable" />
            <PersonItem initials="M2" color="#73590c" name="Modelo 200" />
          </ul>
        </Panel>
      </Column>
      <Column>
        <Panel>
          <PanelTitle>Perfil de Empresa</PanelTitle>
          <Field id="cnae" label="CNAE" value="36" />
          <Field id="iae" label="Epígrafe IAE" value="896" />
          <Row>
            <RowLabel htmlFor="tipo">Tipo de Persona</RowLabel>
            <BoxedSelect id="tipo" defaultValue="Física">
              <option>Física</option>
            </BoxedSelect>
          </Row>
          <Field id="empleados" label="Número de empleados" value="63" tall />
          <Field id="ingresos" label="Ingresos anuales" value="50.000,00 €" />
        </Panel>
        <Timeline />
      </Column>
    </FormGrid>
    <Scrollbar length="466px" />
  </FormArea>
);

const Status = () => (
  <StatusBar>
    <IconButton type="button" aria-label="Abrir en ventana"><Icon name="popOut" size={14} /></IconButton>
    <StatusText $left={33}>Activo</StatusText>
    <StatusDivider />
    <span>Estado:</span>
    <StatusText $left={15}>Activo</StatusText>
    <Modified>
      <label htmlFor="fecha">Fecha de modificación:</label>
      <StatusField>
        <input id="fecha" defaultValue="18/09/2018" />
        <Icon name="calendar" />
      </StatusField>
      <StatusField $muted>
        <input aria-label="Hora" defaultValue="11:38" />
      </StatusField>
      <UpButton type="button" aria-label="Subir"><Icon name="chevronUp" size={14} /></UpButton>
    </Modified>
    <SaveButton type="button"><Icon name="save" size={14} />Guardar</SaveButton>
  </StatusBar>
);

export default function App() {
  return (
    <Page>
      <GlobalStyle />
      <Header />
      <Body>
        <SideNav />
        <Main>
          <Commands />
          <Record />
          <Form />
          <Status />
        </Main>
      </Body>
    </Page>
  );
}
